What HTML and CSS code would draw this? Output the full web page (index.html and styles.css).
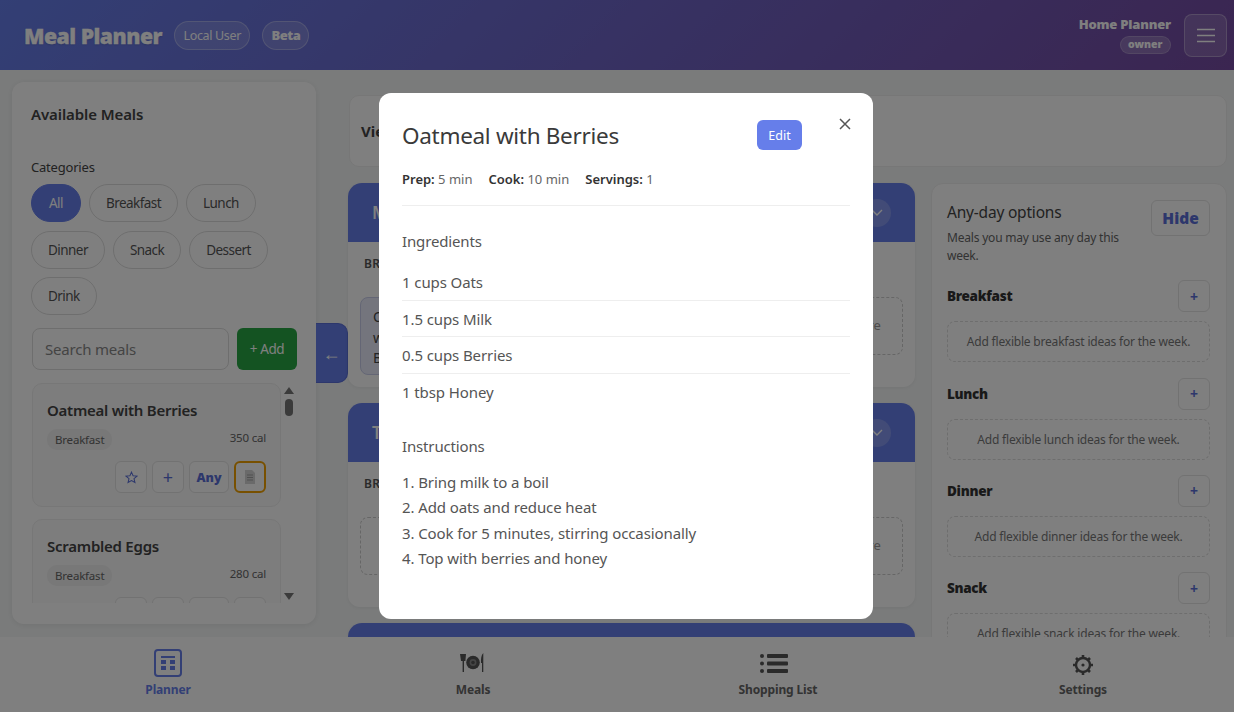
FILE: index.html
```html
<!DOCTYPE html>
<html lang="en">
<head>
  <meta charset="UTF-8" />
  <meta name="viewport" content="width=device-width, initial-scale=1.0" />
  <title>Meal Planner</title>
  <link rel="stylesheet" href="styles.css">
</head>
<body>
  <div class="app">
    <header class="topbar">
      <div class="brand">
        <h1>Meal Planner</h1>
        <span class="pill">Local User</span>
        <span class="pill pill-bold">Beta</span>
      </div>
      <div class="account">
        <div class="account-info">
          <strong>Home Planner</strong>
          <span class="role">owner</span>
        </div>
        <button class="menu-btn" aria-label="Menu">
          <svg width="18" height="15" viewBox="0 0 18 15"><path d="M0 1.5h18M0 7.5h18M0 13.5h18" stroke="currentColor" stroke-width="1.6"/></svg>
        </button>
      </div>
    </header>

    <main class="workspace">
      <aside class="meals-panel">
        <h2>Available Meals</h2>
        <div class="cat-label">Categories</div>
        <div class="chips">
          <button class="chip active">All</button>
          <button class="chip">Breakfast</button>
          <button class="chip">Lunch</button>
          <button class="chip">Dinner</button>
          <button class="chip">Snack</button>
          <button class="chip">Dessert</button>
          <button class="chip">Drink</button>
        </div>
        <div class="search-row">
          <input type="text" placeholder="Search meals">
          <button class="add-btn">+ Add</button>
        </div>
        <div class="meal-scroll">
          <div class="meal-list">
            <div class="meal-card">
              <h3>Oatmeal with Berries</h3>
              <div class="meal-meta"><span class="tag">Breakfast</span><span class="cal">350 cal</span></div>
              <div class="meal-actions">
                <button class="mini"><svg width="13" height="13" viewBox="0 0 14 14"><path d="M7 1.2l1.700 3.900 4.200.4-3.200 2.800 1 4.100L7 10.200l-3.700 2.200 1-4.100L1.100 5.500l4.200-.4z" fill="none" stroke="currentColor" stroke-width="1.100"/></svg></button>
                <button class="mini">+</button>
                <button class="mini any">Any</button>
                <button class="mini focused">
                  <svg width="12" height="14" viewBox="0 0 12 14"><path d="M1 0h7l3 3v11H1z" fill="#d4d4d4"/><path d="M3 5h6M3 7.500h6M3 10h6" stroke="#a0a0a0" stroke-width="1"/></svg>
                </button>
              </div>
            </div>
            <div class="meal-card">
              <h3>Scrambled Eggs</h3>
              <div class="meal-meta"><span class="tag">Breakfast</span><span class="cal">280 cal</span></div>
              <div class="meal-actions">
                <button class="mini"></button>
                <button class="mini"></button>
                <button class="mini any"></button>
                <button class="mini"></button>
              </div>
            </div>
          </div>
          <div class="scroll-rail">
            <span class="arrow-up"></span>
            <span class="thumb"></span>
            <span class="arrow-down"></span>
          </div>
        </div>
      </aside>

      <button class="collapse-tab">←</button>

      <div class="planner">
        <section class="view-card"><strong>View</strong></section>
        <div class="planner-cols">
          <div class="days">
            <section class="day">
              <div class="day-head"><span>Monday</span><span class="chev"><svg width="12" height="7" viewBox="0 0 12 7"><path d="M1 1l5 5 5-5" fill="none" stroke="currentColor" stroke-width="1.400"/></svg></span></div>
              <div class="day-body">
                <div class="slot-label">BREAKFAST</div>
                <div class="slot-row">
                  <div class="planned">Oatmeal with Berries</div>
                  <div class="empty-slot">Add here</div>
                </div>
              </div>
            </section>
            <section class="day">
              <div class="day-head"><span>Tuesday</span><span class="chev"><svg width="12" height="7" viewBox="0 0 12 7"><path d="M1 1l5 5 5-5" fill="none" stroke="currentColor" stroke-width="1.400"/></svg></span></div>
              <div class="day-body">
                <div class="slot-label">BREAKFAST</div>
                <div class="slot-row">
                  <div class="empty-slot">Add here</div>
                  <div class="empty-slot">Add here</div>
                </div>
              </div>
            </section>
            <section class="day">
              <div class="day-head"><span>Wednesday</span></div>
            </section>
          </div>

          <aside class="flex-panel">
            <div class="flex-head">
              <div>
                <h2>Any-day options</h2>
                <p>Meals you may use any day this week.</p>
              </div>
              <button class="hide-btn">Hide</button>
            </div>
            <div class="flex-group">
              <div class="flex-title"><strong>Breakfast</strong><button class="plus">+</button></div>
              <div class="flex-empty">Add flexible breakfast ideas for the week.</div>
            </div>
            <div class="flex-group">
              <div class="flex-title"><strong>Lunch</strong><button class="plus">+</button></div>
              <div class="flex-empty">Add flexible lunch ideas for the week.</div>
            </div>
            <div class="flex-group">
              <div class="flex-title"><strong>Dinner</strong><button class="plus">+</button></div>
              <div class="flex-empty">Add flexible dinner ideas for the week.</div>
            </div>
            <div class="flex-group">
              <div class="flex-title"><strong>Snack</strong><button class="plus">+</button></div>
              <div class="flex-empty">Add flexible snack ideas for the week.</div>
            </div>
          </aside>
        </div>
      </div>
    </main>

    <nav class="bottom-nav">
      <a class="nav-item current">
        <span class="nav-icon boxed">
          <svg width="14" height="14" viewBox="0 0 14 14" fill="currentColor"><rect x="0" y="0" width="14" height="2"/><rect x="0" y="4" width="5" height="4"/><rect x="9" y="4" width="5" height="4"/><rect x="0" y="10" width="5" height="4"/><rect x="9" y="10" width="5" height="4"/></svg>
        </span>
        Planner
      </a>
      <a class="nav-item">
        <span class="nav-icon">
          <svg class="plate" width="24" height="20" viewBox="0 0 24 20" fill="currentColor"><path d="M0 1h6l-.6 7H4v11H2.600V8H1z"/><circle cx="13" cy="9.500" r="6.800"/><circle cx="13" cy="9.500" r="3.400" fill="#8a8a8a"/><circle cx="13" cy="9.500" r="1.800"/><path d="M22 19V10h-1c-.2-4 .2-8 2.300-10v19z"/></svg>
        </span>
        Meals
      </a>
      <a class="nav-item">
        <span class="nav-icon">
          <svg class="list-icon" width="28" height="21" viewBox="0 0 28 21" fill="currentColor"><circle cx="2" cy="3" r="2"/><circle cx="2" cy="10.500" r="2"/><circle cx="2" cy="18" r="2"/><rect x="7" y="1" width="21" height="4" rx="1"/><rect x="7" y="8.500" width="21" height="4" rx="1"/><rect x="7" y="16" width="21" height="4" rx="1"/></svg>
        </span>
        Shopping List
      </a>
      <a class="nav-item">
        <span class="nav-icon">
          <svg class="gear" width="20" height="20" viewBox="0 0 20 20"><circle cx="10" cy="10" r="7" fill="none" stroke="currentColor" stroke-width="2.400"/><circle cx="10" cy="10" r="1.600" fill="currentColor"/><path d="M10 0v3M10 17v3M0 10h3M17 10h3M3 3l2 2M15 15l2 2M17 3l-2 2M5 15l-2 2" stroke="currentColor" stroke-width="2.600"/></svg>
        </span>
        Settings
      </a>
    </nav>
  </div>

  <div class="overlay">
    <div class="modal">
      <button class="modal-close" aria-label="Close">
        <svg width="12" height="12" viewBox="0 0 12 12"><path d="M1 1l10 10M11 1L1 11" stroke="currentColor" stroke-width="1.500"/></svg>
      </button>
      <div class="modal-head">
        <h2>Oatmeal with Berries</h2>
        <button class="edit-btn">Edit</button>
      </div>
      <div class="modal-meta">
        <span><b>Prep:</b> 5 min</span>
        <span><b>Cook:</b> 10 min</span>
        <span><b>Servings:</b> 1</span>
      </div>
      <h3>Ingredients</h3>
      <ul class="ingredients">
        <li>1 cups Oats</li>
        <li>1.5 cups Milk</li>
        <li>0.5 cups Berries</li>
        <li>1 tbsp Honey</li>
      </ul>
      <h3 class="instructions-title">Instructions</h3>
      <ol class="instructions">
        <li>1. Bring milk to a boil</li>
        <li>2. Add oats and reduce heat</li>
        <li>3. Cook for 5 minutes, stirring occasionally</li>
        <li>4. Top with berries and honey</li>
      </ol>
    </div>
  </div>
</body>
</html>
```

FILE: styles.css
```css
* {
  box-sizing: border-box;
  font-family: 'Noto Sans', 'Open Sans', sans-serif;
}
body {
  margin: 0;
  background: #f5f7f7;
  color: #444;
  overflow: hidden;
}
button {
  font: inherit;
  cursor: pointer;
}
.app {
  height: 100vh;
  display: flex;
  flex-direction: column;
  overflow: hidden;
}

/* top bar */
.topbar {
  height: 70px;
  flex: none;
  display: flex;
  justify-content: space-between;
  align-items: center;
  padding: 0 7px 0 24px;
  background: linear-gradient(135deg, #667eea, #764ba2);
  color: #fff;
}
.brand {
  display: flex;
  align-items: center;
  gap: 12px;
}
.brand h1 {
  margin: 0;
  font-size: 21.2px;
  font-weight: 900;
  letter-spacing: -0.5px;
  -webkit-text-stroke: 0.3px #fff;
  text-shadow: 0 1px 2px rgba(0,0,0,0.15);
}
.pill {
  height: 29px;
  display: flex;
  align-items: center;
  padding: 0 8.5px;
  border-radius: 15px;
  border: 1px solid rgba(255,255,255,0.3);
  background: rgba(255,255,255,0.15);
  font-size: 12.5px;
  letter-spacing: -0.35px;
}
.pill-bold {
  padding: 0 8px;
  font-weight: 900;
  font-size: 13px;
  letter-spacing: -0.5px;
}
.account {
  display: flex;
  align-items: center;
  gap: 13px;
}
.account-info {
  display: flex;
  flex-direction: column;
  align-items: flex-end;
  gap: 3px;
  padding-bottom: 2px;
}
.account-info strong {
  font-size: 13px;
  font-weight: 900;
  letter-spacing: -0.2px;
  line-height: 18px;
}
.role {
  height: 18px;
  padding: 0 7.5px;
  border-radius: 9px;
  border: 1px solid rgba(255,255,255,0.2);
  background: rgba(255,255,255,0.2);
  font-size: 10.5px;
  font-weight: 900;
  line-height: 15px;
}
.menu-btn {
  width: 43px;
  height: 43px;
  border: 1px solid rgba(255,255,255,0.3);
  border-radius: 8px;
  background: rgba(255,255,255,0.15);
  color: #fff;
  display: flex;
  align-items: center;
  justify-content: center;
}

/* layout */
.workspace {
  flex: 1;
  min-height: 0;
  display: flex;
  align-items: flex-start;
  padding: 12px 7px 0 12px;
  overflow: hidden;
}
.meals-panel {
  width: 304px;
  height: 542px;
  flex: none;
  background: #fff;
  border-radius: 12px;
  box-shadow: 0 1px 6px rgba(0,0,0,0.08);
  padding: 20px 19px;
}
.meals-panel h2 {
  margin: 0;
  font-size: 15px;
  font-weight: 600;
  line-height: 24px;
  letter-spacing: -0.1px;
}
.cat-label {
  margin-top: 32px;
  font-size: 13px;
  line-height: 18px;
  letter-spacing: -0.2px;
}
.chips {
  margin-top: 8px;
  display: flex;
  flex-wrap: wrap;
  gap: 8.5px 8px;
}
.chip {
  height: 38px;
  padding: 0 16px;
  border: 1px solid #ddd;
  border-radius: 19px;
  background: #fff;
  color: #555;
  font-size: 13.5px;
  letter-spacing: -0.55px;
}
.chip.active {
  padding: 0 17px;
  background: #667eea;
  border-color: #667eea;
  color: #fff;
}
.search-row {
  margin-top: 13px;
  margin-left: 1px;
  display: flex;
  gap: 8px;
  width: 265px;
}
.search-row input {
  width: 197px;
  height: 42px;
  padding: 0 12px;
  border: 1px solid #ddd;
  border-radius: 8px;
  font-size: 15px;
  letter-spacing: -0.2px;
  outline: none;
}
.search-row input::placeholder {
  color: #888;
}
.add-btn {
  width: 60px;
  height: 42px;
  border: none;
  border-radius: 6px;
  background: #28a745;
  color: #fff;
  font-size: 13.5px;
  letter-spacing: -0.4px;
}
.meal-scroll {
  margin-top: 13px;
  margin-left: 1px;
  height: 220px;
  width: 265px;
  display: flex;
  overflow: hidden;
}
.meal-list {
  width: 249px;
  flex: none;
  display: flex;
  flex-direction: column;
  gap: 12px;
}
.meal-card {
  flex: none;
  height: 124px;
  padding: 14px 14px;
  border: 1px solid #eee;
  border-radius: 10px;
  background: #fafafa;
}
.meal-card h3 {
  margin: 0;
  font-size: 15px;
  font-weight: 600;
  line-height: 24px;
  letter-spacing: -0.25px;
}
.meal-meta {
  margin-top: 7px;
  display: flex;
  justify-content: space-between;
  align-items: flex-start;
}
.tag {
  height: 21px;
  padding: 0 8px;
  border-radius: 10px;
  background: #f0f0f0;
  color: #666;
  font-size: 11.5px;
  line-height: 21px;
  letter-spacing: -0.2px;
}
.cal {
  font-size: 11.5px;
  color: #666;
  line-height: 18px;
  letter-spacing: -0.2px;
}
.meal-actions {
  margin-top: 11px;
  display: flex;
  justify-content: flex-end;
  gap: 5px;
}
.mini {
  height: 32px;
  min-width: 32px;
  padding: 0;
  border: 1px solid #e4e4e4;
  border-radius: 6px;
  background: #fff;
  color: #5a6fd8;
  font-size: 18px;
  display: flex;
  align-items: center;
  justify-content: center;
}
.mini.any {
  width: 40px;
  font-size: 12.5px;
  font-weight: 900;
}
.mini.focused {
  border: 2px solid #f0a000;
}
.scroll-rail {
  flex: 1;
  display: flex;
  flex-direction: column;
  align-items: center;
  padding-top: 4px;
}
.arrow-up {
  border: 5px solid transparent;
  border-top: none;
  border-bottom: 7px solid #777;
  width: 0;
}
.thumb {
  width: 8px;
  height: 17px;
  margin-top: 5px;
  border-radius: 4px;
  background: #777;
}
.arrow-down {
  margin-top: auto;
  margin-bottom: 3px;
  border: 5px solid transparent;
  border-bottom: none;
  border-top: 7px solid #777;
  width: 0;
}
.collapse-tab {
  width: 32px;
  height: 60px;
  flex: none;
  margin-top: 241px;
  padding: 0;
  border: 1px solid #5a6fd8;
  border-left: none;
  border-radius: 0 10px 10px 0;
  background: #667eea;
  color: #fff;
  font-size: 18px;
}
.planner {
  flex: 1;
  min-width: 0;
  display: flex;
  flex-direction: column;
  gap: 17px;
}
.view-card {
  height: 72px;
  margin-top: 13px;
  margin-left: 1px;
  padding: 0 11px;
  display: flex;
  align-items: center;
  background: #fff;
  border: 1px solid #eee;
  border-radius: 10px;
  font-size: 15px;
}
.planner-cols {
  display: flex;
  gap: 16px;
  align-items: flex-start;
  margin-top: -1px;
}
.days {
  width: 567px;
  flex: none;
  display: flex;
  flex-direction: column;
  gap: 16px;
}
.day {
  background: #fff;
  border-radius: 14px 14px 12px 12px;
  box-shadow: 0 1px 4px rgba(0,0,0,0.06);
}
.day-head {
  height: 59px;
  display: flex;
  align-items: center;
  justify-content: space-between;
  padding: 0 24px;
  border-radius: 14px 14px 0 0;
  background: #667eea;
  color: #fff;
  font-size: 17px;
  font-weight: 600;
}
.chev {
  width: 28px;
  height: 28px;
  border-radius: 50%;
  background: rgba(255,255,255,0.2);
  display: flex;
  align-items: center;
  justify-content: center;
}
.day-body {
  height: 145px;
  padding: 14px 12px;
}
.slot-label {
  padding-left: 4px;
  font-size: 12px;
  font-weight: 600;
  line-height: 16px;
  letter-spacing: 0.4px;
  color: #555;
}
.slot-row {
  margin-top: 25px;
  display: flex;
  justify-content: space-between;
  align-items: flex-start;
}
.planned {
  width: 100px;
  height: 78px;
  padding: 9px 12px;
  border: 1px solid #c8cdea;
  border-radius: 8px;
  background: #e8ebfa;
  font-size: 14px;
  line-height: 20.5px;
}
.empty-slot {
  width: 120px;
  height: 58px;
  padding-top: 18px;
  padding-left: 20px;
  border: 1.5px dashed #ccc;
  border-radius: 8px;
  text-align: center;
  font-size: 13px;
  color: #999;
}
.flex-panel {
  width: 296px;
  flex: none;
  padding: 16px 16px 16px 15px;
  background: #fff;
  border: 1px solid #eee;
  border-radius: 12px;
}
.flex-head {
  display: flex;
  justify-content: space-between;
  align-items: flex-start;
  gap: 20px;
}
.flex-head h2 {
  margin: 0;
  font-size: 15.5px;
  font-weight: 400;
  line-height: 24px;
  letter-spacing: -0.2px;
}
.flex-head p {
  margin: 5px 0 0;
  font-size: 12px;
  line-height: 18px;
  color: #666;
  letter-spacing: -0.2px;
}
.hide-btn {
  width: 59px;
  height: 36px;
  flex: none;
  padding: 0;
  border: 1px solid #e4e4e4;
  border-radius: 6px;
  background: #fff;
  color: #5a6fd8;
  font-size: 15.5px;
  font-weight: 900;
}
.flex-group {
  margin-top: 15.3px;
}
.flex-title {
  display: flex;
  justify-content: space-between;
  align-items: center;
  font-size: 13.5px;
  color: #333;
}
.flex-title strong {
  font-weight: 900;
  letter-spacing: -0.3px;
}
.plus {
  width: 32px;
  height: 32px;
  padding: 0;
  border: 1px solid #e4e4e4;
  border-radius: 6px;
  background: #fff;
  color: #5a6fd8;
  font-size: 14px;
  font-weight: 700;
}
.flex-empty {
  height: 41px;
  margin-top: 9px;
  display: flex;
  align-items: center;
  justify-content: center;
  border: 1px dashed #ddd;
  border-radius: 8px;
  font-size: 12px;
  letter-spacing: -0.2px;
  color: #777;
}

/* bottom nav */
.bottom-nav {
  position: relative;
  height: 75px;
  flex: none;
  display: grid;
  grid-template-columns: repeat(4, 305px);
  padding: 0 0 0 15.5px;
  background: #fff;
}
.nav-item {
  display: flex;
  flex-direction: column;
  align-items: center;
  font-size: 12px;
  font-weight: 700;
  letter-spacing: -0.15px;
  line-height: 16px;
  color: #666;
}
.nav-item.current {
  color: #667eea;
}
.nav-icon {
  height: 28px;
  margin-top: 12px;
  margin-bottom: 5px;
  display: flex;
  align-items: center;
  justify-content: center;
  color: #555;
}
.nav-icon.boxed {
  width: 28px;
  border: 2px solid #667eea;
  border-radius: 4px;
  color: #667eea;
}
.plate {
  margin-right: 2px;
}
.list-icon {
  margin-right: 9px;
}
.gear {
  margin-top: 4px;
}

/* modal */
.overlay {
  position: fixed;
  inset: 0;
  display: flex;
  align-items: center;
  justify-content: center;
  padding-left: 18px;
  background: rgba(0,0,0,0.5);
}
.modal {
  position: relative;
  width: 494px;
  height: 526px;
  padding: 24px 23px;
  background: #fff;
  border-radius: 12px;
  color: #555;
}
.modal-close {
  position: absolute;
  top: 25px;
  right: 22px;
  padding: 0;
  border: none;
  background: none;
  color: #555;
  width: 12px;
  height: 12px;
  display: flex;
}
.modal-head {
  height: 36px;
  display: flex;
  align-items: center;
  justify-content: space-between;
  padding-right: 48px;
}
.modal-head h2 {
  margin: 0;
  font-size: 22.5px;
  font-weight: 400;
  letter-spacing: -0.3px;
  color: #3a3a3a;
}
.edit-btn {
  width: 45px;
  height: 30px;
  padding: 0;
  border: none;
  border-radius: 6px;
  background: #667eea;
  color: #fff;
  font-size: 12.5px;
}
.modal-meta {
  margin-top: 17px;
  padding-bottom: 17px;
  display: flex;
  gap: 16px;
  border-bottom: 1px solid #eee;
  font-size: 13px;
  line-height: 18px;
  color: #666;
}
.modal-meta b {
  font-weight: 600;
  color: #333;
}
.modal h3 {
  margin: 24px 0 0;
  font-size: 15px;
  font-weight: 400;
  line-height: 22px;
  letter-spacing: -0.15px;
}
.ingredients {
  list-style: none;
  margin: 12px 0 0;
  padding: 0;
}
.ingredients li {
  height: 36.7px;
  padding-top: 7px;
  font-size: 15px;
  line-height: 22px;
  letter-spacing: -0.1px;
  border-bottom: 1px solid #eee;
}
.ingredients li:last-child {
  border-bottom: none;
}
.modal h3.instructions-title {
  margin-top: 24px;
}
.instructions {
  list-style: none;
  margin: 13px 0 0;
  padding: 0;
  font-size: 15px;
  line-height: 25.4px;
  letter-spacing: -0.1px;
}
```
